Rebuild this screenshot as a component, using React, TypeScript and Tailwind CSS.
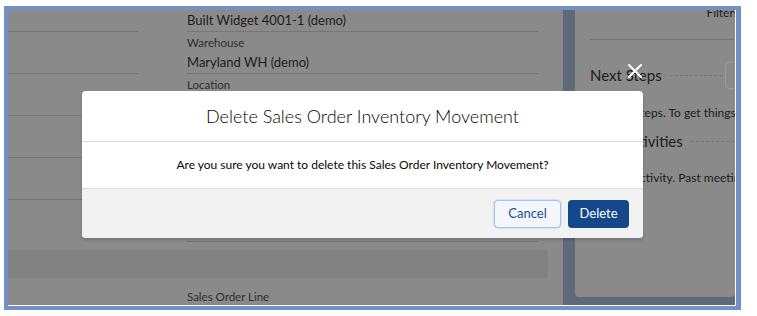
import React from 'react';

const font = { fontFamily: 'Lato, "Open Sans", Arial, sans-serif' };

const Field = ({ label, value, first = false }: { label?: string; value?: string; first?: boolean }) => (
  <div className={`${first ? 'h-[22px]' : 'h-[42px] pt-[2px]'} border-b border-[#767676]`}>
    {label && <div className="text-[11.5px] leading-[18px] text-[#2e2e2e]">{label}</div>}
    {value && <div className="text-[13px] leading-[20px] text-[#1c1c1c]">{value}</div>}
  </div>
);

const App = () => {
  return (
    <div className="w-[757px] h-[316px] bg-white pt-[6px] pl-[4px]" style={font}>
      {/* blue frame around the screenshot */}
      <div className="w-[737px] h-[304px] bg-[#7093c3] pl-[4px] pt-[4px] pr-[5px] pb-[4px]">
        <div className="border-r border-b border-white">
          <div className="relative w-[727px] h-[295px] overflow-hidden bg-[#5e6a79] flex">
            {/* main record card */}
            <div className="w-[555px] h-full bg-[#8a8a8a] shrink-0">
              <div className="flex">
                <div className="w-[130px]">
                  <Field first />
                  <Field />
                  <Field />
                  <Field />
                  <Field />
                </div>
                <div className="ml-[49px] w-[351px]">
                  <Field first value="Built Widget 4001-1 (demo)" />
                  <Field label="Warehouse" value="Maryland WH (demo)" />
                  <Field label="Location" value="Bin A-01 (demo)" />
                  <Field label="Quantity" value="1" />
                  <Field label="Status" value="Open" />
                  <Field label="Created" value="" />
                </div>
              </div>
              <div className="mt-[8px] h-[28px] w-[540px] bg-[#818181] rounded-r-[4px]" />
              <div className="mt-[10px] pl-[179px] text-[11.5px] leading-[18px] text-[#2e2e2e]">Sales Order Line</div>
            </div>

            {/* right activity card */}
            <div className="ml-[12px] w-[160px] h-[287px] bg-[#8a8a8a] rounded-b-[4px] overflow-hidden pl-[15px] shrink-0">
              <div className="h-[30px] border-b border-[#767676] flex justify-end">
                <span className="-mt-[6px] -mr-[4px] text-[12px] leading-[18px] text-[#1c1c1c]">Filters</span>
              </div>
              <div className="mt-[21px] h-[28px] w-[175px] flex items-center">
                <span className="text-[15px] text-[#1c1c1c] whitespace-nowrap">Next Steps</span>
                <div className="ml-[8px] mr-[3px] flex-1 border-t border-dashed border-[#777]" />
                <div className="w-[40px] h-[27px] border border-[#9c9c9c] rounded-[4px] shrink-0" />
              </div>
              <div className="mt-[14px] text-[12px] leading-[20px] text-[#1c1c1c] whitespace-nowrap">
                No next steps. To get things moving, add a task or set up a meeting.
              </div>
              <div className="mt-[4px] h-[28px] w-[200px] flex items-center">
                <span className="text-[15px] text-[#1c1c1c] whitespace-nowrap">Past Activities</span>
                <div className="ml-[8px] flex-1 border-t border-dashed border-[#777]" />
              </div>
              <div className="mt-[13px] text-[12px] leading-[20px] text-[#1c1c1c] whitespace-nowrap">
                No past activity. Past meetings and tasks marked as done show up here.
              </div>
            </div>

            {/* close icon over the backdrop */}
            <svg className="absolute left-[619px] top-[53px]" width="16" height="16" viewBox="0 0 16 16">
              <path d="M2 2 L14 14 M14 2 L2 14" stroke="#ffffff" strokeWidth="2" strokeLinecap="round" />
            </svg>

            {/* modal */}
            <div className="absolute left-[74px] top-[81px] w-[561px] bg-white rounded-[4px] shadow-[0_2px_3px_rgba(0,0,0,0.16)]">
              <div className="h-[51px] flex items-center justify-center border-b border-[#dddbda]">
                <h2 className="text-[18px] font-light text-[#080707]">Delete Sales Order Inventory Movement</h2>
              </div>
              <div className="h-[46px] flex items-center justify-center text-[12px] text-[#080707]">
                Are you sure you want to delete this Sales Order Inventory Movement?
              </div>
              <div className="h-[50px] border-t border-[#dddbda] bg-[#f3f2f2] rounded-b-[4px] flex items-center justify-end gap-[7px] pr-[14px]">
                <button className="w-[67px] h-[28px] rounded-[4px] bg-[#f4f6f9] border border-[#a3c3ea] shadow-[0_0_2px_#9fc2ec] text-[13px] text-[#1b5297]">
                  Cancel
                </button>
                <button className="w-[61px] h-[28px] rounded-[4px] bg-[#15488b] text-[13px] text-white">
                  Delete
                </button>
              </div>
            </div>
          </div>
        </div>
      </div>
    </div>
  );
};

export default App;
